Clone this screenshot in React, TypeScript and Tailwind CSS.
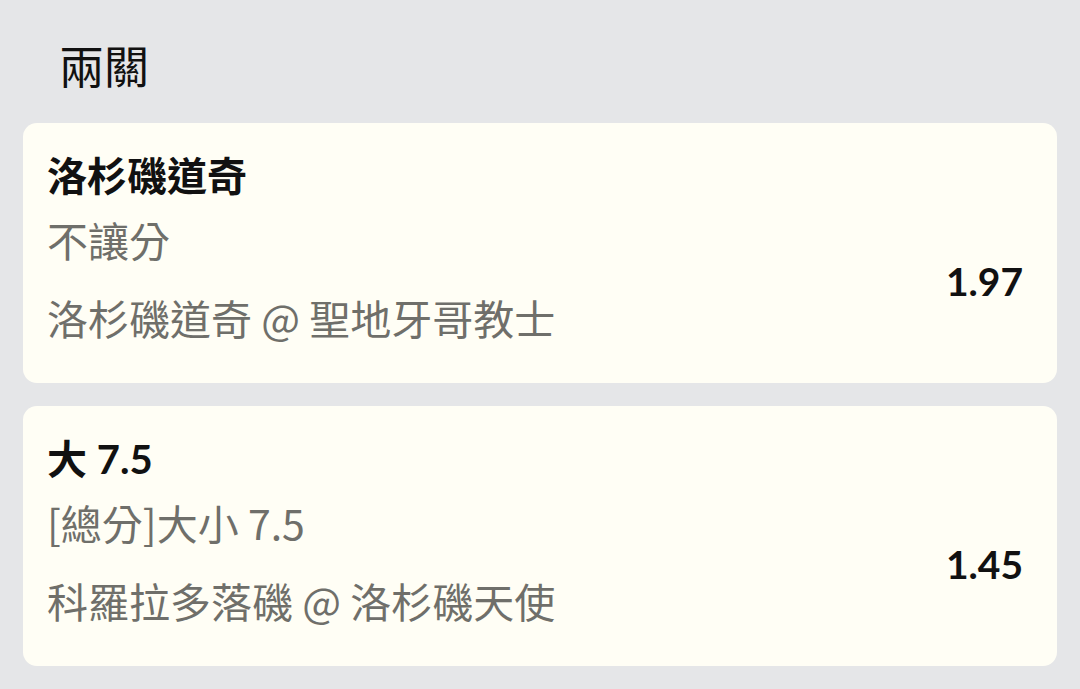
const font = { fontFamily: "Lato, 'Noto Sans CJK TC', sans-serif" }
const cjk = { fontFamily: "'Noto Sans CJK TC', sans-serif" }

type Leg = {
  pick: string
  market: string
  match: string
  odds: string
}

const legs: Leg[] = [
  { pick: "洛杉磯道奇", market: "不讓分", match: "洛杉磯道奇 @ 聖地牙哥教士", odds: "1.97" },
  { pick: "大 7.5", market: "[總分]大小 7.5", match: "科羅拉多落磯 @ 洛杉磯天使", odds: "1.45" },
]

function LegCard({ leg }: { leg: Leg }) {
  return (
    <div className="rounded-[14px] bg-[#fffef5] pl-[24px] pr-[34px] pt-[23px] pb-[37px]">
      <div className="text-[40px] leading-[60px] font-bold text-[#111111]">{leg.pick}</div>
      <div className="flex items-center justify-between">
        <div style={cjk} className="text-[#6f6f6a]">
          <div className="mt-[4px] text-[41px] leading-[58px]">{leg.market}</div>
          <div className="mt-[20px] text-[41px] leading-[58px]">{leg.match}</div>
        </div>
        <div className="mt-[10px] text-[39px] font-bold text-[#111111]">{leg.odds}</div>
      </div>
    </div>
  )
}

export default function App() {
  return (
    <div style={font} className="min-h-[689px] bg-[#e5e6e8] px-[23px] pt-[37px] pb-[23px]">
      <h1 className="pl-[36px] text-[45px] leading-[60px] text-[#111111] mb-[26px]">兩關</h1>
      <div className="flex flex-col gap-[23px]">
        {legs.map((leg) => (
          <LegCard key={leg.odds} leg={leg} />
        ))}
      </div>
    </div>
  )
}
